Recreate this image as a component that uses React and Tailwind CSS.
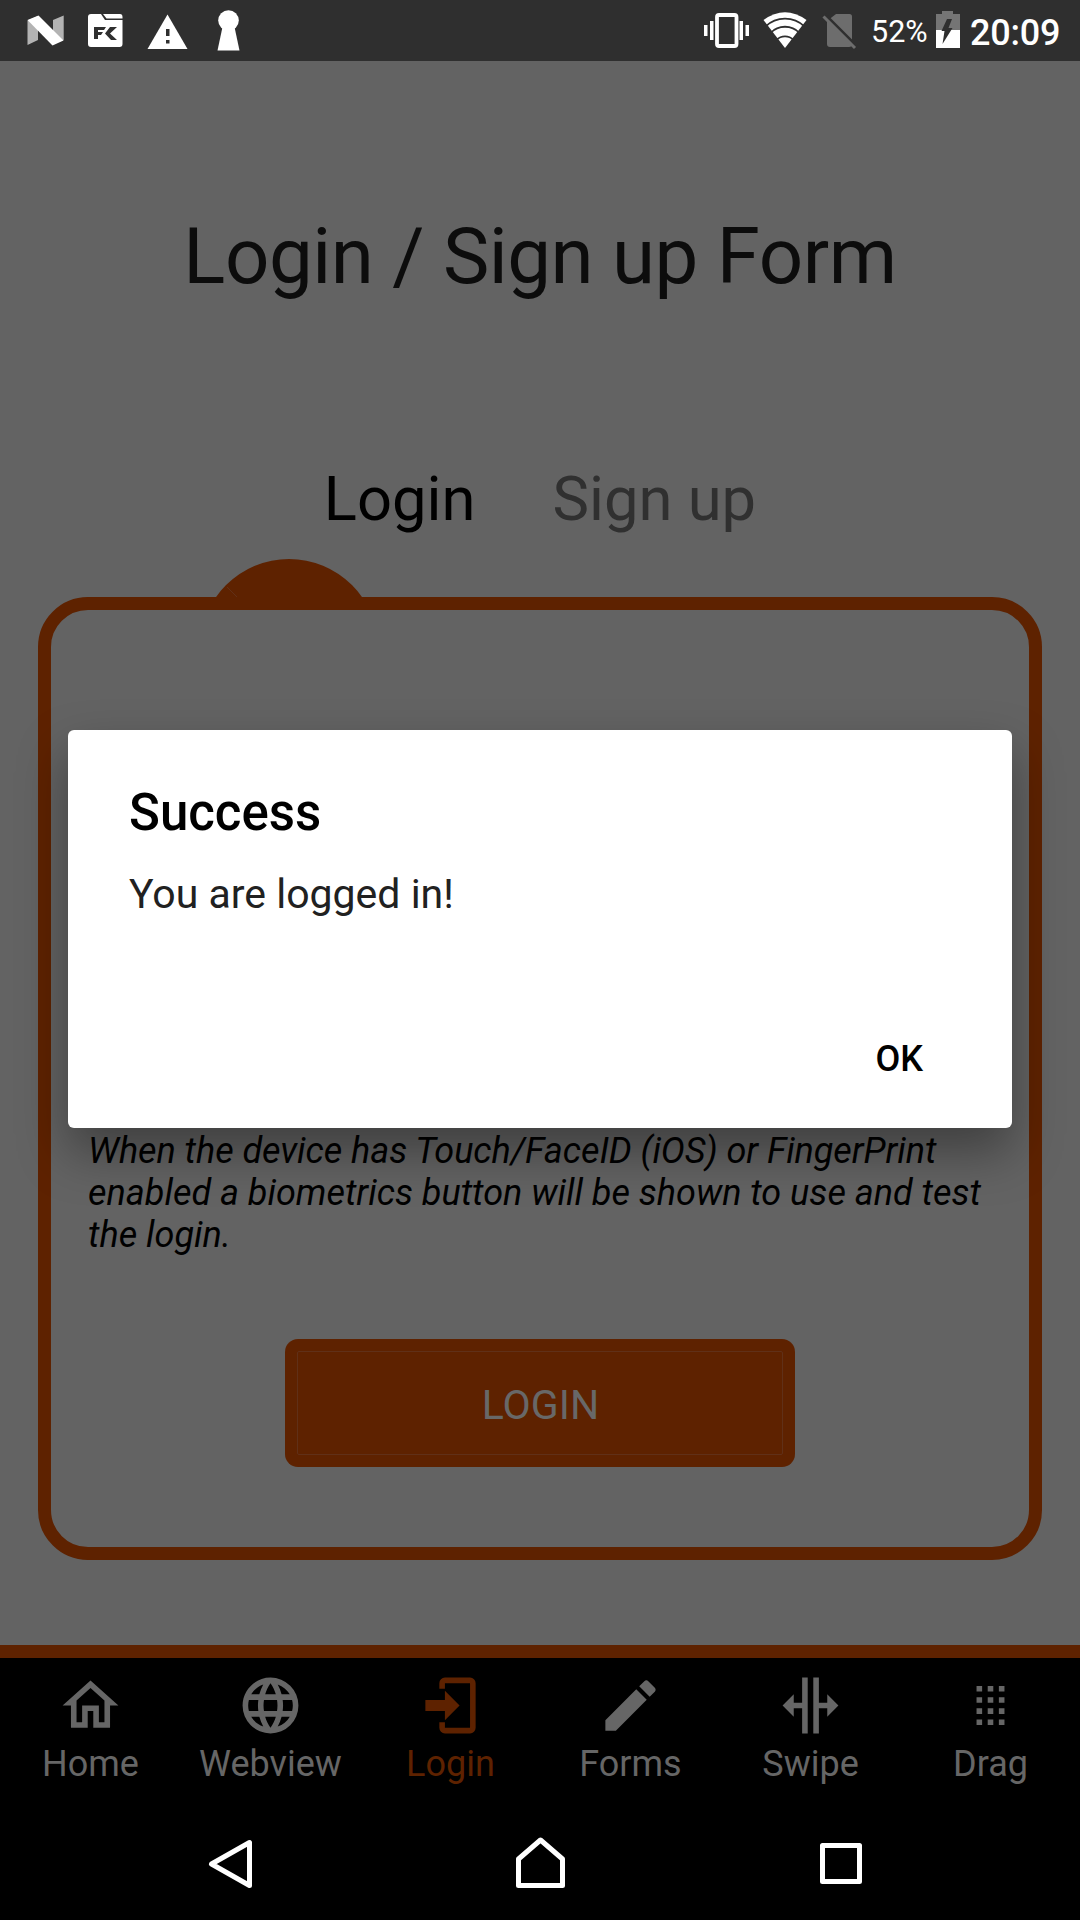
import React from "react";

const tabs = [
  { label: "Home", d: "M12 5.69L17 10.19V18H15V12H9V18H7V10.19L12 5.69M12 3L2 12H5V20H11V14H13V20H19V12H22" },
  { label: "Webview", d: "M16.36,14C16.44,13.34 16.5,12.68 16.5,12C16.5,11.32 16.44,10.66 16.36,10H19.74C19.9,10.64 20,11.31 20,12C20,12.69 19.9,13.36 19.74,14M14.59,19.56C15.19,18.45 15.65,17.25 15.97,16H18.92C17.96,17.65 16.43,18.93 14.59,19.56M14.34,14H9.66C9.56,13.34 9.5,12.68 9.5,12C9.5,11.32 9.56,10.65 9.66,10H14.34C14.43,10.65 14.5,11.32 14.5,12C14.5,12.68 14.43,13.34 14.34,14M12,19.96C11.17,18.76 10.5,17.43 10.09,16H13.91C13.5,17.43 12.83,18.76 12,19.96M8,8H5.08C6.03,6.34 7.57,5.06 9.4,4.44C8.8,5.55 8.35,6.75 8,8M5.08,16H8C8.35,17.25 8.8,18.45 9.4,19.56C7.57,18.93 6.03,17.65 5.08,16M4.26,14C4.1,13.36 4,12.69 4,12C4,11.31 4.1,10.64 4.26,10H7.64C7.56,10.66 7.5,11.32 7.5,12C7.5,12.68 7.56,13.34 7.64,14M12,4.03C12.83,5.23 13.5,6.57 13.91,8H10.09C10.5,6.57 11.17,5.23 12,4.03M18.92,8H15.97C15.65,6.75 15.19,5.55 14.59,4.44C16.43,5.07 17.96,6.34 18.92,8M12,2C6.47,2 2,6.5 2,12A10,10 0 0,0 12,22A10,10 0 0,0 22,12A10,10 0 0,0 12,2Z" },
  { label: "Login", active: true, d: "M10,17.25V14H3V10H10V6.75L15.25,12L10,17.25M10,2H19A2,2 0 0,1 21,4V20A2,2 0 0,1 19,22H10A2,2 0 0,1 8,20V18H10V20H19V4H10V6H8V4A2,2 0 0,1 10,2Z" },
  { label: "Forms", d: "M20.71,7.04C21.1,6.65 21.1,6 20.71,5.63L18.37,3.29C18,2.9 17.35,2.9 16.96,3.29L15.12,5.12L18.87,8.87M3,17.25V21H6.75L17.81,9.93L14.06,6.18L3,17.25Z" },
  { label: "Swipe", d: "M18,16V13H15V22H13V2H15V11H18V8L22,12L18,16M2,12L6,16V13H9V22H11V2H9V11H6V8L2,12Z" },
  { label: "Drag", d: "M7 5h2v2H7zM11 5h2v2h-2zM15 5h2v2h-2zM7 9h2v2H7zM11 9h2v2h-2zM15 9h2v2h-2zM7 13h2v2H7zM11 13h2v2h-2zM15 13h2v2h-2zM7 17h2v2H7zM11 17h2v2h-2zM15 17h2v2h-2z" },
];

function StatusBar() {
  return (
    <header className="flex h-[61px] items-start justify-between bg-[#2f2f2f] text-white">
      <svg className="h-[61px] w-[270px]" viewBox="0 0 270 61" fill="#fff">
        <path d="M27.5 20.5L38 16v24L27.5 45zM53 20L63.700 15.500V40L53 44z" fill="#b3b3b3" />
        <path d="M27.500 20L38.500 15.500L63.500 40.500L52.500 45.500z" />
        <path d="M91 14h10l4 6h17.500v24q0 3-3 3H91q-3 0-3-3V17q0-3 3-3zM103 14h17q2.500 0 2.500 3v1.500h-16z" />
        <path d="M94 27h12l-2 3h-6v2h5l-2 3h-3v4h-4zM110 27h7l-7 6.500 7 6.500h-6l-6-6.500z" fill="#2f2f2f" />
        <path d="M167.500 14.500L187.500 49h-40z" />
        <path d="M166 29h3.500v7H166zM166 40h3.500v3.500H166z" fill="#2f2f2f" />
        <circle cx="228.500" cy="20.500" r="10.300" />
        <path d="M222.500 27h12l5 23.500h-22z" />
      </svg>
      <div className="flex h-[61px] items-start">
        <svg className="h-[61px] w-[182px]" viewBox="698 0 182 61" fill="#fff">
          <path d="M704 25h3.500v11H704zM710 21h3.500v19H710zM739.500 21h3.500v19h-3.500zM745.500 25h3.500v11h-3.500z" />
          <rect x="717" y="15" width="19.500" height="31" rx="2" fill="none" stroke="#fff" strokeWidth="3.800" />
          <path d="M785 48L763.500 20Q785 4.500 806.500 20z" />
          <path d="M765.500 26.500A28 28 0 0 1 804.500 26.500M770.500 33A20 20 0 0 1 799.500 33M776.500 40A12 12 0 0 1 793.500 40" fill="none" stroke="#2f2f2f" strokeWidth="1.800" />
          <path d="M836 14h13.500q2.500 0 2.500 2.500V44q0 3-3 3h-19q-3 0-3-3V21z" fill="#6d6d6d" />
          <path d="M825 14.500l32 32" stroke="#2f2f2f" strokeWidth="3" />
          <path d="M823.500 16.500l31.500 31.500" stroke="#6d6d6d" strokeWidth="3" />
        </svg>
        <span className="ml-[-9px] w-[56px] whitespace-nowrap pt-[12px] text-[30.500px] leading-[40px]">52%</span>
        <svg className="h-[61px] w-[40px]" viewBox="927 0 40 61">
          <path d="M936 14h6v-3h11v3h7v16h-24z" fill="#757575" />
          <path d="M936 30h24v18h-24z" fill="#fff" />
          <path d="M947 19h5l-3.500 9h4L942.500 44l2-13h-3z" fill="#2f2f2f" />
        </svg>
        <span className="ml-[3px] w-[110px] whitespace-nowrap pt-[12px] text-[36px] font-medium leading-[42px] tracking-[-0.2px]">20:09</span>
      </div>
    </header>
  );
}

function Dialog() {
  return (
    <section role="dialog" className="absolute left-[68px] top-[730px] flex h-[398px] w-[944px] flex-col rounded-[6px] bg-white px-[61px] shadow-[0_24px_50px_rgba(0,0,0,0.36)]">
      <h2 className="mt-[52px] text-[51px] font-medium leading-[61px] text-black">Success</h2>
      <p className="mt-[27px] text-[41px] leading-[48px] text-[#212121]">You are logged in!</p>
      <button className="ml-auto mr-[28px] mt-[120px] text-[36px] font-medium leading-[42px] text-black">OK</button>
    </section>
  );
}

function TabBar() {
  return (
    <nav className="grid h-[165px] grid-cols-6 border-t-[13px] border-[#5e2200] bg-black">
      {tabs.map((t) => (
        <div key={t.label} className={t.active ? "flex flex-col items-center pt-[14px] text-[#5e2200]" : "flex flex-col items-center pt-[14px] text-[#666666]"}>
          <svg className="size-[67px]" viewBox="0 0 24 24" fill="currentColor"><path d={t.d} /></svg>
          <span className="mt-[4px] pl-[1px] text-[36px] leading-[42px]">{t.label}</span>
        </div>
      ))}
    </nav>
  );
}

function SystemNav() {
  return (
    <footer className="h-[110px] bg-black">
      <svg className="h-[110px] w-full" viewBox="0 1810 1080 110" fill="none" stroke="#fff" strokeWidth="5" strokeLinejoin="round">
        <path d="M249.500 1842.500v43L211.500 1864z" />
        <path d="M518.500 1885.500V1859L540.500 1840l22 19v26.500z" />
        <rect x="822.500" y="1845.500" width="37" height="36" />
      </svg>
    </footer>
  );
}

export default function App() {
  return (
    <div className="relative h-[1920px] w-[1080px] overflow-hidden bg-[#636363] font-['Roboto',sans-serif]">
      <StatusBar />
      <main className="flex h-[1584px] flex-col items-center">
        <h1 className="mt-[150px] text-[78px] leading-[92px] tracking-[-0.46px] text-[#0c0c0c]">Login / Sign up Form</h1>
        <div className="mt-[160px] flex h-[72px] gap-[77px] text-[61.500px] leading-[72px]">
          <span className="text-black">Login</span>
          <span className="text-[#303030]">Sign up</span>
        </div>
        <div className="mt-[24px] h-[38px] w-full">
          <svg className="ml-[200px] h-[38px] w-[180px]" viewBox="200 559 180 38" fill="#5e2200">
            <circle cx="289" cy="648" r="89" />
            <path d="M227 587l10 10" stroke="#613018" strokeWidth="1" />
          </svg>
        </div>
        <section className="flex h-[963px] w-[1004px] flex-col items-center rounded-[50px] border-[13px] border-[#5e2200]">
          <p className="mt-[520px] w-[904px] whitespace-nowrap text-[36px] italic leading-[42px] text-black">
            <span className="tracking-[-0.05px]">When the device has Touch/FaceID (iOS) or FingerPrint</span><br />enabled a biometrics button will be shown to use and test<br />the login.
          </p>
          <button className="mt-[83px] h-[128px] w-[510px] rounded-[13px] bg-[#5e2200] p-[12px]">
            <span className="flex h-full items-center justify-center rounded-[2px] border border-[#603018] pl-[1px] pt-[3px] text-[41px] leading-[48px] text-[#686868]">LOGIN</span>
          </button>
        </section>
      </main>
      <TabBar />
      <SystemNav />
      <Dialog />
    </div>
  );
}
